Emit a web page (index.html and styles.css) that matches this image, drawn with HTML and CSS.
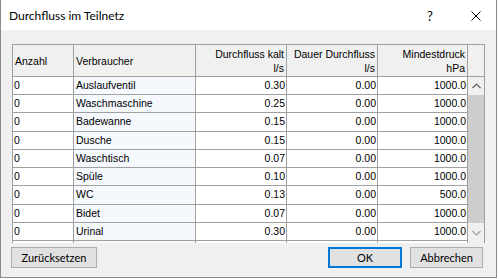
FILE: index.html
```html
<!DOCTYPE html>
<html>
<head>
<meta charset="utf-8">
<link rel="stylesheet" href="styles.css">
</head>
<body>
<div class="window">
  <div class="titlebar">
    <span class="title">Durchfluss im Teilnetz</span>
    <span class="help">?</span>
    <span class="close"><svg width="10" height="10" viewBox="0 0 10 10"><path d="M0.5 0.5 L9.5 9.5 M9.5 0.5 L0.5 9.5" stroke="#000" stroke-width="1" fill="none"/></svg></span>
  </div>
  <div class="content">
    <div class="grid">
      <div class="head">
        <div class="hc left">Anzahl</div>
        <div class="hc left">Verbraucher</div>
        <div class="hc right">Durchfluss kalt<br>l/s</div>
        <div class="hc right">Dauer Durchfluss<br>l/s</div>
        <div class="hc right">Mindestdruck<br>hPa</div>
        <div class="hc filler"></div>
      </div>
      <div class="gbody">
        <div class="rows">
          <div class="row"><div class="c n">0</div><div class="c name">Auslaufventil</div><div class="c r">0.30</div><div class="c r">0.00</div><div class="c r">1000.0</div></div>
          <div class="row"><div class="c n">0</div><div class="c name">Waschmaschine</div><div class="c r">0.25</div><div class="c r">0.00</div><div class="c r">1000.0</div></div>
          <div class="row"><div class="c n">0</div><div class="c name">Badewanne</div><div class="c r">0.15</div><div class="c r">0.00</div><div class="c r">1000.0</div></div>
          <div class="row"><div class="c n">0</div><div class="c name">Dusche</div><div class="c r">0.15</div><div class="c r">0.00</div><div class="c r">1000.0</div></div>
          <div class="row"><div class="c n">0</div><div class="c name">Waschtisch</div><div class="c r">0.07</div><div class="c r">0.00</div><div class="c r">1000.0</div></div>
          <div class="row"><div class="c n">0</div><div class="c name">Spüle</div><div class="c r">0.10</div><div class="c r">0.00</div><div class="c r">1000.0</div></div>
          <div class="row"><div class="c n">0</div><div class="c name">WC</div><div class="c r">0.13</div><div class="c r">0.00</div><div class="c r">500.0</div></div>
          <div class="row"><div class="c n">0</div><div class="c name">Bidet</div><div class="c r">0.07</div><div class="c r">0.00</div><div class="c r">1000.0</div></div>
          <div class="row"><div class="c n">0</div><div class="c name">Urinal</div><div class="c r">0.30</div><div class="c r">0.00</div><div class="c r">1000.0</div></div>
          <div class="row"><div class="c n"></div><div class="c name"></div><div class="c r"></div><div class="c r"></div><div class="c r"></div></div>
        </div>
        <div class="scrollbar">
          <div class="sb-btn up"><svg width="9" height="6" viewBox="0 0 9 6"><path d="M0.5 5 L4.5 1 L8.5 5" stroke="#606060" stroke-width="1.2" fill="none"/></svg></div>
          <div class="thumb"></div>
          <div class="track"></div>
          <div class="sb-btn down"><svg width="9" height="6" viewBox="0 0 9 6"><path d="M0.5 1 L4.5 5 L8.5 1" stroke="#a0a0a0" stroke-width="1.2" fill="none"/></svg></div>
        </div>
      </div>
    </div>
    <div class="buttons">
      <button class="btn reset">Zurücksetzen</button>
      <button class="btn ok">OK</button>
      <button class="btn cancel">Abbrechen</button>
    </div>
  </div>
</div>
</body>
</html>
```
FILE: styles.css
```css
* { box-sizing: border-box; margin: 0; padding: 0; }
html, body { width: 499px; height: 279px; overflow: hidden; background: #ffffff; }
body { margin: 0; }

.window {
  width: 497px;
  height: 278px;
  border-left: 1px solid #8a8a8a;
  border-right: 1px solid #8a8a8a;
  border-bottom: 1px solid #8a8a8a;
  background: #f0f0f0;
  display: flex;
  flex-direction: column;
}

.titlebar {
  height: 30px;
  background: #ffffff;
  display: flex;
  align-items: center;
  font-family: Lato, "Liberation Sans", sans-serif;
  font-size: 12px;
  color: #000;
}
.title { padding-left: 8px; padding-top: 1px; }
.help { margin-left: auto; width: 12px; text-align: center; margin-right: 35px; font-size: 13px; padding-top: 1px; }
.close { width: 10px; height: 10px; margin-right: 15px; display: flex; margin-top: 2px; }

.content {
  padding: 14px 0 0 11px;
  display: flex;
  flex-direction: column;
}

.grid {
  width: 473px;
  height: 199px;
  border-left: 1px solid #a0a0a0;
  border-top: 1px solid #a0a0a0;
  border-right: 1px solid #a0a0a0;
  overflow: hidden;
  font-family: "Liberation Sans", Arial, sans-serif;
  font-size: 10.5px;
  color: #000;
  background: #f0f0f0;
}

.head {
  display: grid;
  grid-template-columns: 61px 122px 91px 91px 90px 16px;
  height: 32px;
  border-bottom: 1px solid #a0a0a0;
  background: #f0f0f0;
}
.hc {
  border-right: 1px solid #a0a0a0;
  display: flex;
  align-items: center;
  line-height: 14px;
  padding-top: 1px;
}
.hc.left { padding-left: 2px; }
.hc.right { justify-content: flex-end; text-align: right; padding-right: 2px; }
.hc.filler { border-right: none; }

.gbody { display: flex; }
.rows { width: 455px; }
.row {
  display: grid;
  grid-template-columns: 61px 122px 91px 91px 90px;
  height: 18.22px;
}
.c {
  border-right: 1px solid #a0a0a0;
  border-bottom: 1px solid #a0a0a0;
  background: #ffffff;
  white-space: nowrap;
  overflow: hidden;
  line-height: 17px;
}
.c.n { padding-left: 1px; }
.c.name { padding-left: 2px; background: #f5f9fd; }
.c.r { text-align: right; padding-right: 1px; }

.scrollbar {
  width: 16px;
  height: 164px;
  background: #f0f0f0;
  display: flex;
  flex-direction: column;
}
.sb-btn { height: 17px; display: flex; align-items: center; justify-content: center; }
.thumb { height: 128px; background: #cdcdcd; margin: 1px 0 0 0; }
.track { flex: 1; }

.buttons {
  display: flex;
  margin-top: 4px;
  margin-left: -1px;
  width: 472px;
}
.btn {
  height: 21px;
  background: #e1e1e1;
  border: 1px solid #adadad;
  font-family: Lato, "Liberation Sans", sans-serif;
  font-size: 11px;
  color: #000;
}
.reset { width: 86px; }
.ok { width: 74px; margin-left: auto; border: 2px solid #0078d7; }
.cancel { width: 73px; margin-left: 8px; }
```
